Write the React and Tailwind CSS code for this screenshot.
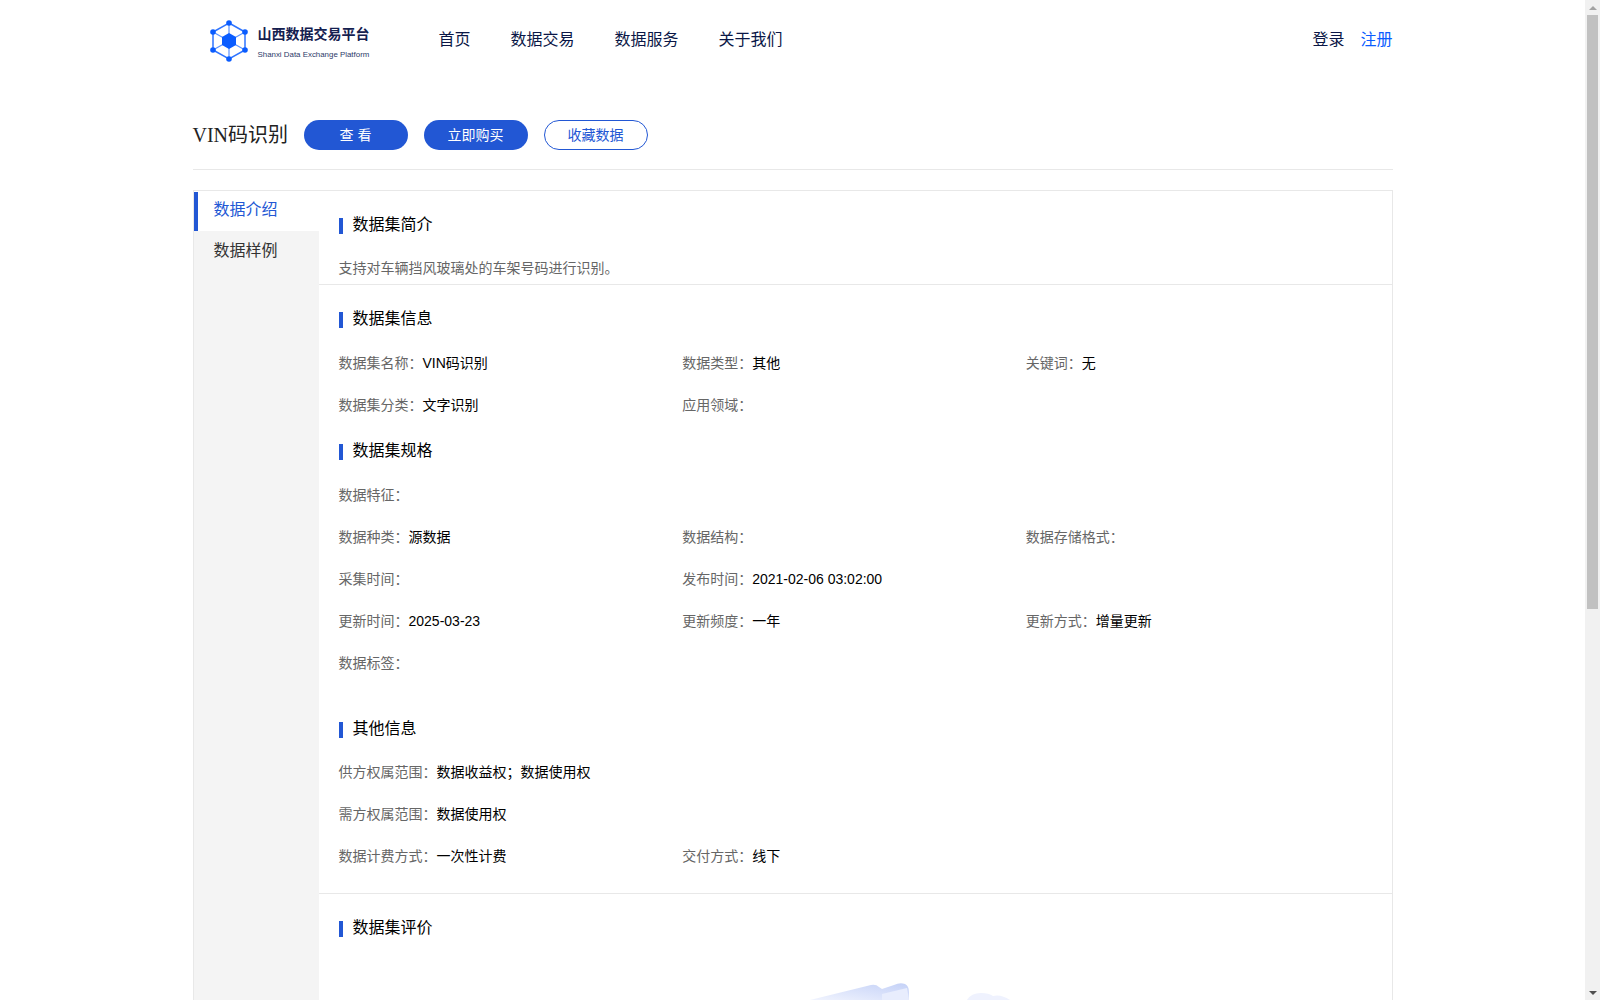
import React from 'react';

const FONT = "font-['Liberation_Sans','Noto_Sans_CJK_SC',sans-serif]";

function Logo() {
  const outer = [[228, 23], [244, 32], [244, 50], [228, 59], [212, 50], [212, 32]];
  return (
    <div className="flex items-center w-[246px] pl-[16px]">
      <svg width="40" height="42" viewBox="208 20 40 42" className="shrink-0 mt-[4px]">
        <polygon points="228,23 244,32 244,50 228,59 212,50 212,32" fill="none" stroke="#2f74ff" strokeWidth="1.5" />
        {outer.map(([x, y]) => (
          <line key={`${x}-${y}`} x1="228" y1="41" x2={x} y2={y} stroke="#5a92ff" strokeWidth="1.2" />
        ))}
        <polygon points="228,33 235,37 235,45 228,49 221,45 221,37" fill="#0a5cff" />
        {outer.map(([x, y]) => (
          <circle key={`${x}_${y}`} cx={x} cy={y} r="2.8" fill="#0a5cff" />
        ))}
      </svg>
      <div className="ml-[9px] mt-[7px]">
        <div className="text-[14px] leading-[20px] font-bold text-[#14204f] whitespace-nowrap">山西数据交易平台</div>
        <div className="text-[7.9px] leading-[12px] mt-[5px] text-[#2c3a69] whitespace-nowrap">Shanxi Data Exchange Platform</div>
      </div>
    </div>
  );
}

function Header() {
  return (
    <div className="h-[78px] flex items-center text-[16px] text-[#0b1747]">
      <Logo />
      <nav className="flex gap-[40px] mt-[1px]">
        <a>首页</a>
        <a>数据交易</a>
        <a>数据服务</a>
        <a>关于我们</a>
      </nav>
      <div className="ml-auto flex gap-[16px] mt-[1px]">
        <a>登录</a>
        <a className="text-[#0a5cff]">注册</a>
      </div>
    </div>
  );
}

function Heading({ children }) {
  return (
    <div className="flex items-start gap-[10px] h-5">
      <span className="w-1 h-4 mt-1 bg-[#2257d4]" />
      <h3 className="mt-px text-[16px] leading-5 text-black">{children}</h3>
    </div>
  );
}

function Field({ label, value }) {
  return (
    <div className="h-[42px] pb-px flex items-center text-[14px] whitespace-nowrap">
      <span className="text-[#666]">{label}：</span>
      <span className="text-black">{value}</span>
    </div>
  );
}

function Row({ items }) {
  return (
    <div className="grid grid-cols-3">
      {items.map((f) => <Field key={f[0]} label={f[0]} value={f[1]} />)}
    </div>
  );
}

function Illustration() {
  return (
    <svg width="1032" height="20" viewBox="0 0 1032 20" className="block">
      <defs>
        <linearGradient id="tube" x1="0" y1="1" x2="1" y2="0">
          <stop offset="0" stopColor="#f1f4fe" />
          <stop offset="1" stopColor="#c4d1f7" />
        </linearGradient>
      </defs>
      <path d="M471 20 L532 5 Q537 4 540 7 L543 9 L555 5 Q561 2 566 4 Q570 6 570 12 L570 20 Z" fill="url(#tube)" />
      <path d="M543 14 L568 8 L570 20 L543 20 Z" fill="#e8edfd" />
      <path d="M628 20 Q632 13 642 13 Q650 13 654 16 Q662 14 671 20 Z" fill="#eff2fe" />
    </svg>
  );
}

export default function App() {
  return (
    <div className={`${FONT} h-screen overflow-hidden flex bg-white`}>
      <div className="flex-1 min-w-0">
        <div className="w-[1200px] mx-auto">
          <Header />

          <div className="mt-[42px] pb-[19px] border-b border-[#e8e8e8] flex items-center">
            <h1 className="w-[111px] text-[20px] leading-[30px] text-[#222] font-['Liberation_Serif','Noto_Sans_CJK_SC',serif] whitespace-nowrap">VIN码识别</h1>
            <div className="flex gap-4 text-[14px]">
              <button className="w-[104px] h-[30px] rounded-full bg-[#2257d4] text-white">查 看</button>
              <button className="w-[104px] h-[30px] rounded-full bg-[#2257d4] text-white">立即购买</button>
              <button className="w-[104px] h-[30px] rounded-full border border-[#2257d4] text-[#2257d4]">收藏数据</button>
            </div>
          </div>

          <div className="mt-5 border border-[#e8e8e8] flex h-[900px]">
            <aside className="w-[125px] shrink-0 pt-px text-[16px] flex flex-col">
              <div className="h-[39px] pb-[3px] border-l-4 border-[#2257d4] pl-4 flex items-center text-[#2257d4]">数据介绍</div>
              <div className="flex-1 bg-[#f4f4f4] pl-5 pt-[8px] leading-6 text-[#333]">数据样例</div>
            </aside>

            <main className="flex-1 min-w-0">
              <section className="pt-[23px] pl-5 pb-[5px] border-b border-[#e8e8e8]">
                <Heading>数据集简介</Heading>
                <p className="mt-[24px] mb-px text-[14px] leading-5 text-[#666]">支持对车辆挡风玻璃处的车架号码进行识别。</p>
              </section>

              <section className="pt-[23px] pl-5 pr-[22px] pb-[15px] border-b border-[#e8e8e8]">
                <Heading>数据集信息</Heading>
                <div className="mt-[15px]">
                  <Row items={[['数据集名称', 'VIN码识别'], ['数据类型', '其他'], ['关键词', '无']]} />
                  <Row items={[['数据集分类', '文字识别'], ['应用领域', '']]} />
                </div>

                <div className="mt-[13px]">
                  <Heading>数据集规格</Heading>
                </div>
                <div className="mt-[15px]">
                  <Row items={[['数据特征', '']]} />
                  <Row items={[['数据种类', '源数据'], ['数据结构', ''], ['数据存储格式', '']]} />
                  <Row items={[['采集时间', ''], ['发布时间', '2021-02-06 03:02:00']]} />
                  <Row items={[['更新时间', '2025-03-23'], ['更新频度', '一年'], ['更新方式', '增量更新']]} />
                  <Row items={[['数据标签', '']]} />
                </div>

                <div className="mt-[33px]">
                  <Heading>其他信息</Heading>
                </div>
                <div className="mt-[14px]">
                  <Row items={[['供方权属范围', '数据收益权；数据使用权']]} />
                  <Row items={[['需方权属范围', '数据使用权']]} />
                  <Row items={[['数据计费方式', '一次性计费'], ['交付方式', '线下']]} />
                </div>
              </section>

              <section className="pt-[23px] pl-5">
                <Heading>数据集评价</Heading>
                <div className="mt-[43px]">
                  <Illustration />
                </div>
              </section>
            </main>
          </div>
        </div>
      </div>

      {/* scrollbar */}
      <div className="w-[15px] shrink-0 bg-[#f1f1f1] flex flex-col items-center">
        <div className="h-[15px] flex items-center justify-center">
          <span className="w-0 h-0 border-x-[4px] border-x-transparent border-b-[4px] border-b-[#a3a3a3]" />
        </div>
        <div className="w-[11px] h-[594px] bg-[#c1c1c1]" />
        <div className="mt-auto h-[15px] flex items-center justify-center">
          <span className="w-0 h-0 border-x-[4px] border-x-transparent border-t-[4px] border-t-[#505050]" />
        </div>
      </div>
    </div>
  );
}
